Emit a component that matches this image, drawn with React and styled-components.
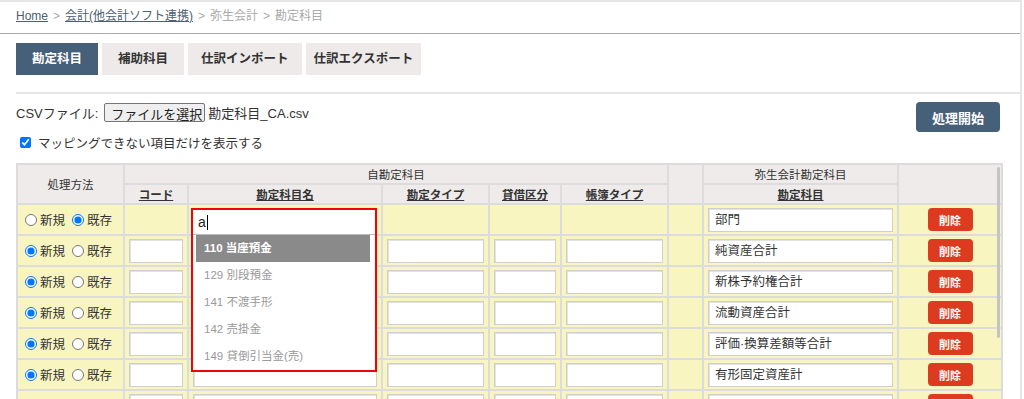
import styled, { createGlobalStyle } from "styled-components";

const GlobalStyle = createGlobalStyle`
  html, body {
    margin: 0;
    padding: 0;
    background: #fff;
  }
  body {
    font-family: "Liberation Sans", "Noto Sans CJK JP", sans-serif;
    color: #333;
    overflow: hidden;
  }
`;

const FONT = `"Liberation Sans", "Noto Sans CJK JP", sans-serif`;

const Page = styled.div`
  width: 1020px;
  height: 397px;
  border-top: 2px solid #e6e6e6;
  border-right: 2px solid #e6e6e6;
  overflow: hidden;
  font-family: ${FONT};
`;

const Breadcrumb = styled.div`
  height: 31px;
  line-height: 29px;
  padding-left: 16px;
  font-size: 12px;
  color: #aaa;
  a {
    color: #4d5e70;
    text-decoration: underline;
  }
`;

const Sep = styled.span`
  margin: 0 5px;
  color: #aaa;
`;

const Divider = styled.div`
  height: 1px;
  background: #aaa;
`;

const Tabs = styled.div`
  display: flex;
  gap: 4px;
  margin-top: 9px;
  padding-left: 16px;
`;

const Tab = styled.div`
  height: 32px;
  line-height: 32px;
  padding: 0 ${(p) => p.$pad || 16}px;
  font-size: 12.5px;
  font-weight: bold;
  white-space: nowrap;
  background: ${(p) => (p.$active ? "#47607a" : "#edeae9")};
  color: ${(p) => (p.$active ? "#fff" : "#333")};
`;

const Rule = styled.div`
  height: 2px;
  margin: 17px 0 0 16px;
  background: #e6e6e6;
`;

const Toolbar = styled.div`
  display: flex;
  justify-content: space-between;
  align-items: flex-start;
  padding: 8px 20px 0 16px;
`;

const Options = styled.div`
  display: flex;
  flex-direction: column;
  gap: 10px;
  font-size: 13px;
`;

const FileRow = styled.div`
  display: flex;
  align-items: center;
  height: 20px;
`;

const FileButton = styled.button`
  height: 19px;
  margin: 0 3px 0 6px;
  padding: 0 2px 0 6px;
  font-family: ${FONT};
  font-size: 13px;
  color: #222;
  background: #efefef;
  border: 1px solid #767676;
  border-radius: 2px;
`;

const CheckRow = styled.label`
  display: flex;
  align-items: center;
  height: 20px;
  font-size: 12.5px;
  input {
    margin: 0 7px 0 4px;
    width: 11px;
    height: 11px;
  }
`;

const StartButton = styled.button`
  height: 30px;
  padding: 0 16px;
  font-family: ${FONT};
  font-size: 13px;
  font-weight: bold;
  color: #fff;
  background: #47607a;
  border: none;
  border-radius: 4px;
`;

const TableWrap = styled.div`
  position: relative;
  margin: 11px 0 0 16px;
  width: 987px;
`;

const Table = styled.table`
  width: 987px;
  table-layout: fixed;
  border-collapse: collapse;
  border: 2px solid #dcdcdc;
  font-size: 11.5px;
`;

const Th = styled.th`
  height: 18px;
  padding: 0;
  border: 2px solid #dcdcdc;
  background: #eeebea;
  font-weight: normal;
  color: #333;
  text-align: center;
  white-space: nowrap;
`;

const SortLink = styled.span`
  font-weight: bold;
  text-decoration: underline;
  color: #333;
`;

const Td = styled.td`
  height: 29px;
  padding: 0 4px;
  border: 2px solid #dcdcdc;
  background: #f8f5c1;
  text-align: ${(p) => p.$align || "left"};
`;

const RadioGroup = styled.div`
  display: flex;
  align-items: center;
  font-size: 12.5px;
  white-space: nowrap;
  label {
    display: flex;
    align-items: center;
    margin-right: 4px;
  }
  input {
    margin: 0 3px 0 3px;
    width: 12px;
    height: 12px;
  }
`;

const Field = styled.div`
  box-sizing: border-box;
  width: 100%;
  height: 24px;
  line-height: 22px;
  padding: 0 6px;
  background: #fff;
  border: 1px solid #cfcfcf;
  box-shadow: inset 1px 1px 0 #e2e2e2;
  font-size: 12.5px;
  color: #333;
  white-space: nowrap;
  overflow: hidden;
`;

const DeleteButton = styled.button`
  width: 45px;
  height: 23px;
  padding: 0;
  font-family: ${FONT};
  font-size: 11px;
  font-weight: bold;
  color: #fff;
  background: #dc3b1f;
  border: none;
  border-radius: 4px;
`;

const Autocomplete = styled.div`
  position: absolute;
  left: 175px;
  top: 45px;
  width: 182px;
  height: 160px;
  border: 2px solid #f2000c;
  background: #fff;
`;

const AcInput = styled.div`
  height: 24px;
  display: flex;
  align-items: center;
  padding-left: 5px;
  border-bottom: 1px solid #bbb;
  font-size: 14px;
  color: #222;
`;

const Caret = styled.span`
  display: inline-block;
  width: 1px;
  height: 15px;
  margin-left: 1px;
  background: #000;
`;

const Menu = styled.ul`
  list-style: none;
  margin: 0;
  padding: 0 5px 0 3px;
`;

const MenuItem = styled.li`
  height: 27px;
  line-height: 27px;
  padding-left: 8px;
  font-size: 11.5px;
  font-weight: ${(p) => (p.$active ? "bold" : "normal")};
  color: ${(p) => (p.$active ? "#fff" : "#999")};
  background: ${(p) => (p.$active ? "#8a8a8a" : "transparent")};
`;

const ScrollThumb = styled.div`
  position: absolute;
  right: 3px;
  top: 4px;
  width: 3px;
  height: 171px;
  background: #c4c4c4;
  border-radius: 2px;
`;

const rows = [
  { mode: "existing", yayoi: "部門" },
  { mode: "new", yayoi: "純資産合計" },
  { mode: "new", yayoi: "新株予約権合計" },
  { mode: "new", yayoi: "流動資産合計" },
  { mode: "new", yayoi: "評価·換算差額等合計" },
  { mode: "new", yayoi: "有形固定資産計" },
  { mode: "new", yayoi: "無形固定資産計" },
];

const suggestions = [
  "110 当座預金",
  "129 別段預金",
  "141 不渡手形",
  "142 売掛金",
  "149 貸倒引当金(売)",
];

function Row({ row, index }) {
  const isNew = row.mode === "new";
  return (
    <tr>
      <Td>
        <RadioGroup>
          <label>
            <input type="radio" name={`m${index}`} defaultChecked={isNew} />
            新規
          </label>
          <label>
            <input type="radio" name={`m${index}`} defaultChecked={!isNew} />
            既存
          </label>
        </RadioGroup>
      </Td>
      <Td>{isNew && <Field />}</Td>
      <Td>{isNew && <Field />}</Td>
      <Td>{isNew && <Field />}</Td>
      <Td>{isNew && <Field />}</Td>
      <Td>{isNew && <Field />}</Td>
      <Td />
      <Td>
        <Field>{row.yayoi}</Field>
      </Td>
      <Td $align="center">
        <DeleteButton>削除</DeleteButton>
      </Td>
    </tr>
  );
}

export default function App() {
  return (
    <>
      <GlobalStyle />
      <Page>
        <Breadcrumb>
          <a>Home</a>
          <Sep>&gt;</Sep>
          <a>会計(他会計ソフト連携)</a>
          <Sep>&gt;</Sep>
          弥生会計
          <Sep>&gt;</Sep>
          勘定科目
        </Breadcrumb>
        <Divider />
        <Tabs>
          <Tab $active>勘定科目</Tab>
          <Tab>補助科目</Tab>
          <Tab $pad={13}>仕訳インポート</Tab>
          <Tab $pad={8}>仕訳エクスポート</Tab>
        </Tabs>
        <Rule />
        <Toolbar>
          <Options>
            <FileRow>
              CSVファイル:
              <FileButton>ファイルを選択</FileButton>
              勘定科目_CA.csv
            </FileRow>
            <CheckRow>
              <input type="checkbox" defaultChecked />
              マッピングできない項目だけを表示する
            </CheckRow>
          </Options>
          <StartButton>処理開始</StartButton>
        </Toolbar>
        <TableWrap>
          <Table>
            <colgroup>
              <col style={{ width: 107 }} />
              <col style={{ width: 64 }} />
              <col style={{ width: 194 }} />
              <col style={{ width: 107 }} />
              <col style={{ width: 72 }} />
              <col style={{ width: 107 }} />
              <col style={{ width: 35 }} />
              <col style={{ width: 195 }} />
              <col style={{ width: 104 }} />
            </colgroup>
            <thead>
              <tr>
                <Th rowSpan={2}>処理方法</Th>
                <Th colSpan={5}>自勘定科目</Th>
                <Th rowSpan={2} />
                <Th>弥生会計勘定科目</Th>
                <Th rowSpan={2} />
              </tr>
              <tr>
                <Th>
                  <SortLink>コード</SortLink>
                </Th>
                <Th>
                  <SortLink>勘定科目名</SortLink>
                </Th>
                <Th>
                  <SortLink>勘定タイプ</SortLink>
                </Th>
                <Th>
                  <SortLink>貸借区分</SortLink>
                </Th>
                <Th>
                  <SortLink>帳簿タイプ</SortLink>
                </Th>
                <Th>
                  <SortLink>勘定科目</SortLink>
                </Th>
              </tr>
            </thead>
            <tbody>
              {rows.map((row, i) => (
                <Row key={i} row={row} index={i} />
              ))}
            </tbody>
          </Table>
          <Autocomplete>
            <AcInput>
              a<Caret />
            </AcInput>
            <Menu>
              {suggestions.map((s, i) => (
                <MenuItem key={s} $active={i === 0}>
                  {s}
                </MenuItem>
              ))}
            </Menu>
          </Autocomplete>
          <ScrollThumb />
        </TableWrap>
      </Page>
    </>
  );
}
